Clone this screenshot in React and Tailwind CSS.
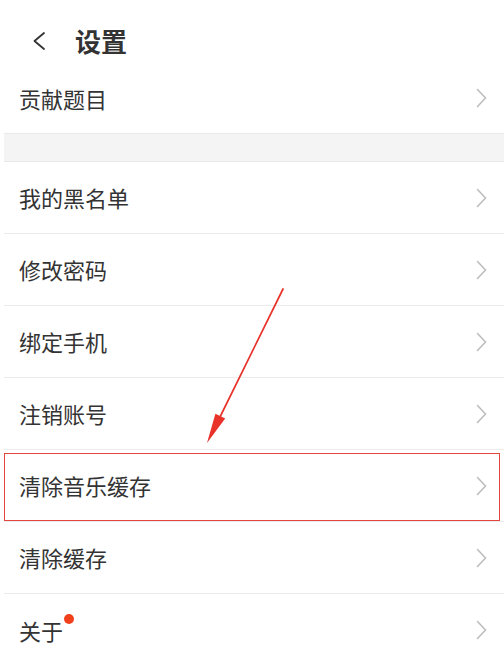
import React from "react";

const Chevron = () => (
  <svg width="11" height="20" viewBox="0 0 11 20" fill="none">
    <polyline points="1.5,1.5 9.5,10 1.5,18.5" stroke="#bdbdbd" strokeWidth="1.6" strokeLinecap="round" strokeLinejoin="round" />
  </svg>
);

const Row = ({ label, dot, highlight, last }) => (
  <div
    className={`relative flex items-center justify-between h-[72px] pl-[15px] pr-[17px] ${
      last ? "" : "border-b border-[#ececec]"
    }`}
  >
    <span className="relative text-[22px] text-[#333]">
      {label}
      {dot && <span className="absolute -right-[11px] top-[0px] w-[10px] h-[10px] rounded-full bg-[#f0401c]"></span>}
    </span>
    <Chevron />
    {highlight && (
      <div className="absolute left-0 right-[4px] top-[3px] bottom-[0px] border-[1.5px] border-[#e4463f] pointer-events-none"></div>
    )}
  </div>
);

export default function App() {
  const rows = ["我的黑名单", "修改密码", "绑定手机", "注销账号", "清除音乐缓存", "清除缓存"];

  return (
    <div
      className="relative w-full h-[664px] overflow-hidden bg-white pl-[4px]"
      style={{ fontFamily: '"Noto Sans CJK SC", "Noto Sans", sans-serif' }}
    >
      {/* Header */}
      <div className="flex items-center h-[63px] pt-[19px]">
        <svg width="14" height="20" viewBox="0 0 14 20" fill="none" className="ml-[28px]">
          <polyline points="12,2 2.5,10 12,18" stroke="#333" strokeWidth="1.8" strokeLinecap="round" strokeLinejoin="round" />
        </svg>
        <span className="ml-[29px] text-[26px] font-bold text-[#333] leading-[30px]">设置</span>
      </div>

      <div className="flex items-center justify-between h-[70px] pl-[15px] pr-[17px]">
        <span className="text-[22px] text-[#333]">贡献题目</span>
        <Chevron />
      </div>

      {/* Section gap */}
      <div className="h-[29px] bg-[#f4f4f4] border-y border-[#e9e9e9]"></div>

      {rows.map((r) => (
        <Row key={r} label={r} highlight={r === "清除音乐缓存"} />
      ))}
      <Row label="关于" dot last />

      {/* Annotation arrow */}
      <svg className="absolute left-0 top-0 pointer-events-none" width="504" height="664" viewBox="0 0 504 664">
        <line x1="283" y1="289" x2="219" y2="419" stroke="#e8322a" strokeWidth="1.7" strokeLinecap="round" />
        <polygon points="207,443 225.2,418.5 215.4,413.7" fill="#e8322a" />
      </svg>
    </div>
  );
}
